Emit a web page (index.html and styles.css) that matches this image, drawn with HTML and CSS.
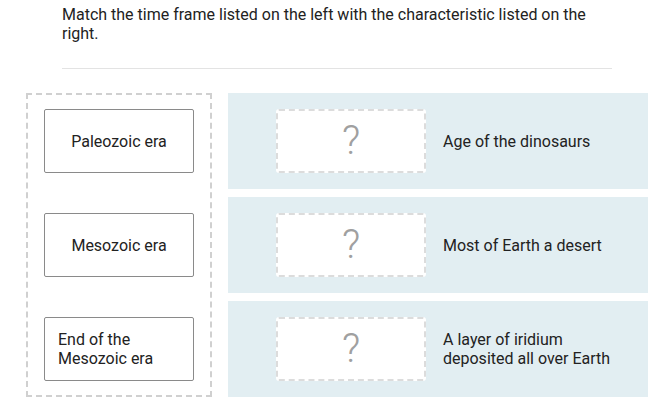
FILE: index.html
```html
<!DOCTYPE html>
<html>
<head>
<meta charset="utf-8">
<link rel="stylesheet" href="styles.css">
</head>
<body>
<div class="page">
  <div class="prompt">
    <p class="instructions">Match the time frame listed on the left with the characteristic listed on the right.</p>
    <hr class="divider">
  </div>
  <div class="match">
    <div class="sources">
      <div class="slot"><div class="card center">Paleozoic era</div></div>
      <div class="slot"><div class="card center">Mesozoic era</div></div>
      <div class="slot"><div class="card">End of the<br>Mesozoic era</div></div>
    </div>
    <div class="targets">
      <div class="row"><div class="drop">?</div><div class="label">Age of the dinosaurs</div></div>
      <div class="row"><div class="drop">?</div><div class="label">Most of Earth a desert</div></div>
      <div class="row"><div class="drop">?</div><div class="label">A layer of iridium<br>deposited all over Earth</div></div>
    </div>
  </div>
</div>
</body>
</html>
```
FILE: styles.css
```css
html, body {
  margin: 0;
  padding: 0;
  background: #fff;
}
body {
  font-family: Roboto, "Liberation Sans", sans-serif;
  color: #222;
}
.page {
  width: 656px;
  height: 405px;
  overflow: hidden;
}
.prompt {
  padding: 5px 0 0 62px;
  width: 550px;
}
.instructions {
  margin: 0;
  font-size: 16px;
  line-height: 19px;
  color: #222;
}
.divider {
  border: 0;
  border-top: 1px solid #e3e3e3;
  margin: 25px 0 0 0;
  height: 0;
}
.match {
  display: flex;
  gap: 16px;
  margin: 24px 0 0 26px;
}
.sources {
  width: 182px;
  border: 2px dashed #d0d0d0;
  display: flex;
  flex-direction: column;
  gap: 8px;
}
.slot {
  height: 96px;
  display: flex;
  align-items: center;
  padding-left: 16px;
}
.slot:first-child { margin-top: -2px; }
.slot:last-child { margin-bottom: -2px; }
.card {
  width: 148px;
  height: 62px;
  border: 1px solid #8a8a8a;
  border-radius: 2px;
  background: #fff;
  display: flex;
  flex-direction: column;
  justify-content: center;
  font-size: 16px;
  line-height: 19px;
  color: #222;
}
.card.center { align-items: center; text-align: center; }
.card:not(.center) { padding-left: 13px; width: 135px; }
.targets {
  width: 420px;
  display: flex;
  flex-direction: column;
  gap: 8px;
}
.row {
  height: 96px;
  background: #e2eef2;
  display: flex;
  align-items: center;
  padding-left: 48px;
}
.drop {
  width: 146px;
  height: 60px;
  border: 2px dashed #dcdcdc;
  border-radius: 3px;
  background: #fff;
  display: flex;
  align-items: center;
  justify-content: center;
  font-size: 40px;
  line-height: 1;
  color: #a0a0a0;
  font-weight: 300;
}
.label {
  margin-left: 17px;
  font-size: 16px;
  line-height: 19px;
  color: #222;
}
```
